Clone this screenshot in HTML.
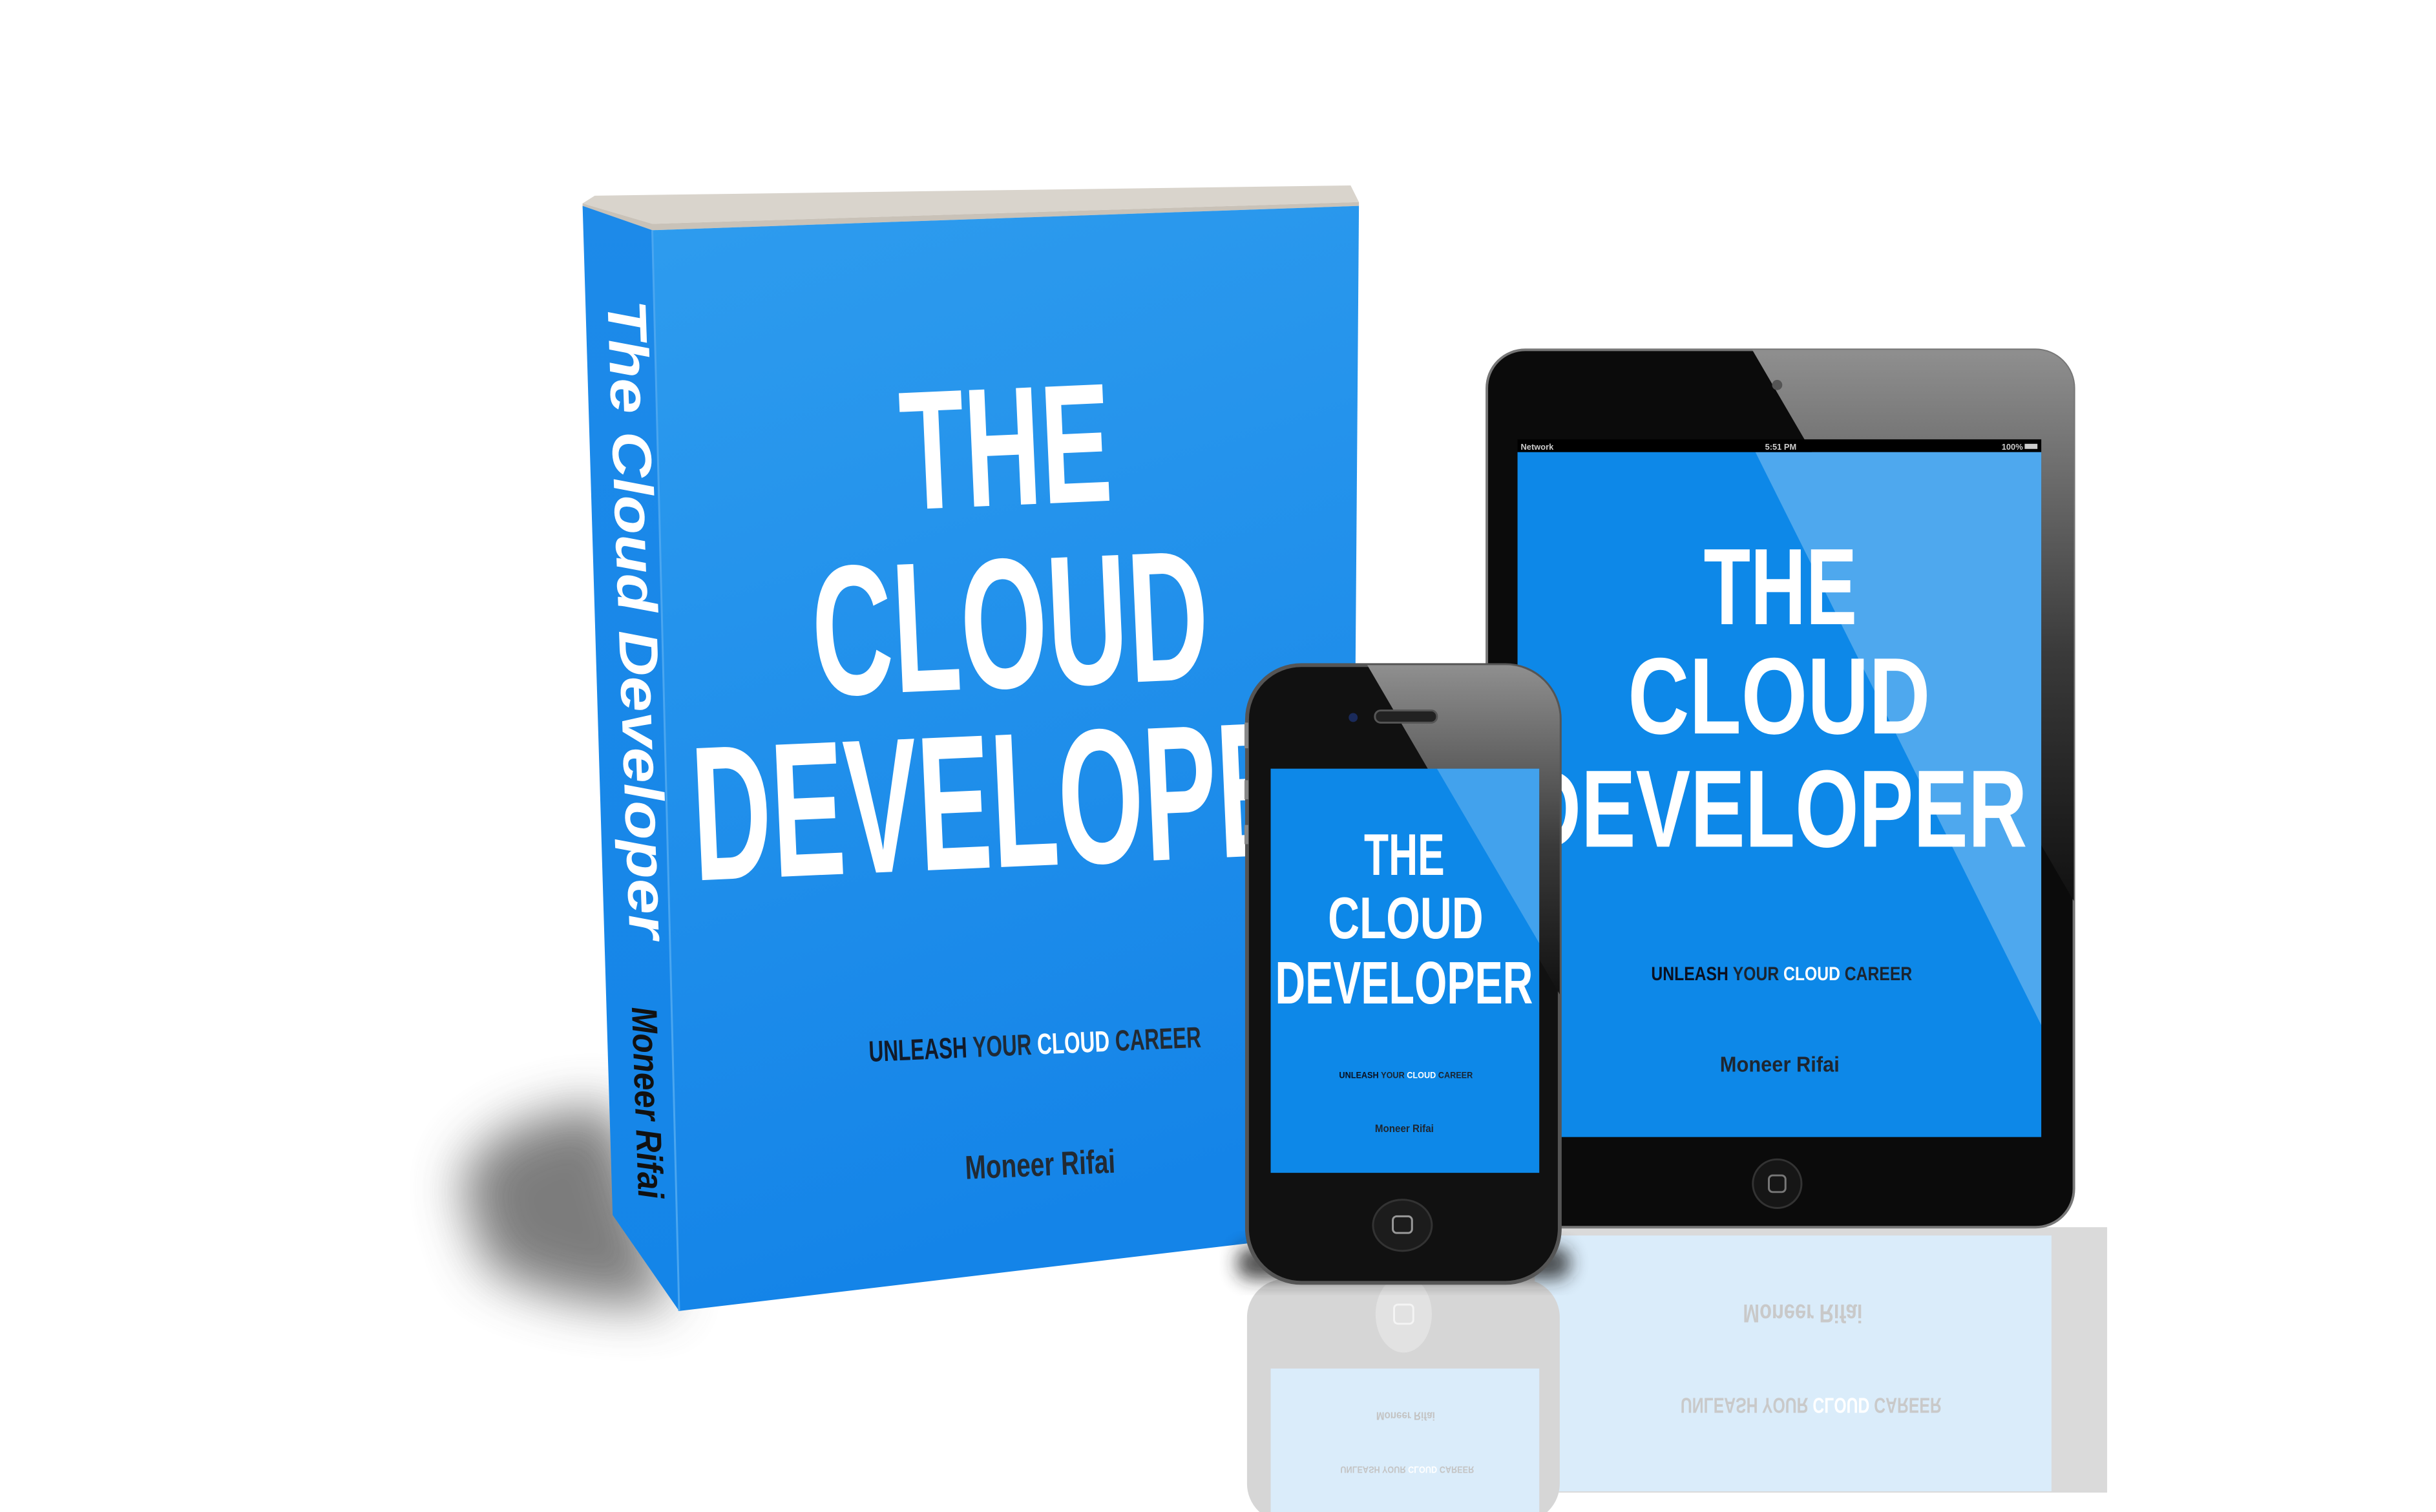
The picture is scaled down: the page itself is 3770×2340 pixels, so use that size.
<!DOCTYPE html>
<html><head><meta charset="utf-8"><style>
html,body{margin:0;padding:0;background:#fff;}
svg{display:block;}
text{font-family:"Liberation Sans",sans-serif;font-weight:bold;}
</style></head><body>
<svg width="3770" height="2340" viewBox="0 0 3770 2340" xmlns="http://www.w3.org/2000/svg">
<defs>
<linearGradient id="front" x1="0" y1="0" x2="0.2" y2="1">
<stop offset="0" stop-color="#2e9cee"/><stop offset="1" stop-color="#1484e8"/></linearGradient>
<linearGradient id="spine" x1="0" y1="0" x2="0" y2="1">
<stop offset="0" stop-color="#1d8ae9"/><stop offset="1" stop-color="#1485e8"/></linearGradient>
<linearGradient id="bez" x1="0" y1="0" x2="0" y2="1">
<stop offset="0" stop-color="#8f8f8f"/><stop offset="0.55" stop-color="#3a3a3a"/><stop offset="1" stop-color="#111"/></linearGradient>
<filter id="blur" x="-50%" y="-50%" width="200%" height="200%"><feGaussianBlur stdDeviation="40"/></filter>
<filter id="blur2" x="-50%" y="-50%" width="200%" height="200%"><feGaussianBlur stdDeviation="14"/></filter>
<clipPath id="ipadc"><rect x="2325" y="547" width="918" height="1372" rx="60"/></clipPath>
<clipPath id="ipads"><rect x="2373" y="707" width="819" height="1071"/></clipPath>
<clipPath id="phc"><rect x="1950" y="1040" width="489" height="966" rx="85"/></clipPath>
<clipPath id="phs"><rect x="1987" y="1202" width="420" height="632"/></clipPath>
</defs>
<g transform="scale(0.9897)">
<!-- book shadow -->
<path d="M720 1850 Q760 1740 960 1730 L1050 2040 Q880 2050 760 1980 Z" fill="#666" filter="url(#blur)" opacity="0.85"/>

<!-- book -->
<polygon points="911,318 1020,350 2125,316 2112,290 930,306" fill="#d9d4cc"/>
<polygon points="911,318 1020,350 2125,316 2125,322 1020,360 911,326" fill="#c9c2b8"/>
<polygon points="911,322 1020,360 1062,2050 958,1900" fill="url(#spine)"/>
<polygon points="1020,360 2125,322 2113,1925 1062,2050" fill="url(#front)"/>
<line x1="1020" y1="360" x2="1062" y2="2050" stroke="#4aa6f0" stroke-width="3"/>

<g transform="translate(950,470) rotate(88)">
<text x="0" y="0" font-size="86" font-style="italic" fill="#fff" textLength="1000" lengthAdjust="spacingAndGlyphs">The Cloud Developer</text>
</g>
<g transform="translate(988,1575) rotate(88)">
<text x="0" y="0" font-size="56" font-style="italic" fill="#111" textLength="300" lengthAdjust="spacingAndGlyphs">Moneer Rifai</text>
</g>

<g transform="rotate(-2.5 1580 1100)">
<text x="1590" y="790" font-size="265" fill="#fff" text-anchor="middle" textLength="330" lengthAdjust="spacingAndGlyphs">THE</text>
<text x="1585" y="1075" font-size="290" fill="#fff" text-anchor="middle" textLength="620" lengthAdjust="spacingAndGlyphs">CLOUD</text>
<text x="1075" y="1355" font-size="300" fill="#fff" textLength="1060" lengthAdjust="spacingAndGlyphs">DEVELOPER</text>
<text x="1335" y="1650" font-size="46" textLength="520" lengthAdjust="spacingAndGlyphs"><tspan fill="#111a2a">UNLEASH </tspan><tspan fill="#1f2a36">YOUR </tspan><tspan fill="#fff">CLOUD </tspan><tspan fill="#222a33">CAREER</tspan></text>
<text x="1595" y="1840" font-size="52" fill="#222a33" text-anchor="middle" textLength="235" lengthAdjust="spacingAndGlyphs">Moneer Rifai</text>
</g>

<!-- iPad reflection -->
<rect x="2370" y="1919" width="925" height="415" fill="#dadada"/>
<rect x="2400" y="1932" width="808" height="400" fill="#daecfa"/>
<g transform="translate(0,4080) scale(1,-1)">
<text x="2819" y="2040" font-size="40" fill="#c9c9c9" text-anchor="middle" textLength="187" lengthAdjust="spacingAndGlyphs">Moneer Rifai</text>
</g>
<g transform="translate(0,4372) scale(1,-1)">
<text x="2628" y="2186" font-size="34" textLength="408" lengthAdjust="spacingAndGlyphs"><tspan fill="#c9c9c9">UNLEASH YOUR </tspan><tspan fill="#fff">CLOUD </tspan><tspan fill="#c9c9c9">CAREER</tspan></text>
</g>

<!-- iPad -->
<rect x="2325" y="547" width="918" height="1372" rx="60" fill="#0b0b0b" stroke="#777" stroke-width="4"/>
<g clip-path="url(#ipadc)">
<polygon points="2740,547 3243,547 3243,1409" fill="url(#bez)"/>
</g>
<rect x="2373" y="687" width="819" height="20" fill="#000"/>
<text x="2378" y="703" font-size="13" fill="#ccc" font-weight="normal">Network</text>
<text x="2760" y="703" font-size="13" fill="#ccc" font-weight="normal">5:51 PM</text>
<text x="3130" y="703" font-size="13" fill="#ccc" font-weight="normal">100%</text>
<rect x="3166" y="694" width="20" height="8" fill="#ccc"/>
<circle cx="2779" cy="602" r="8" fill="#555"/>
<rect x="2373" y="707" width="819" height="1071" fill="#0d88e8"/>
<g clip-path="url(#ipads)">
<polygon points="2745,707 3192,707 3192,1603" fill="#fff" opacity="0.27"/>
</g>
<text x="2784" y="976" font-size="170" fill="#fff" text-anchor="middle" textLength="240" lengthAdjust="spacingAndGlyphs">THE</text>
<text x="2782" y="1147" font-size="170" fill="#fff" text-anchor="middle" textLength="473" lengthAdjust="spacingAndGlyphs">CLOUD</text>
<text x="2380" y="1324" font-size="172" fill="#fff" textLength="790" lengthAdjust="spacingAndGlyphs">DEVELOPER</text>
<text x="2582" y="1533" font-size="30" textLength="408" lengthAdjust="spacingAndGlyphs"><tspan fill="#0a1020">UNLEASH </tspan><tspan fill="#1a2430">YOUR </tspan><tspan fill="#fff">CLOUD </tspan><tspan fill="#1a2430">CAREER</tspan></text>
<text x="2783" y="1676" font-size="34" fill="#1e2630" text-anchor="middle" textLength="187" lengthAdjust="spacingAndGlyphs">Moneer Rifai</text>
<circle cx="2779" cy="1851" r="38" fill="#161616" stroke="#333" stroke-width="3"/>
<rect x="2766" y="1838" width="26" height="26" rx="6" fill="none" stroke="#777" stroke-width="3"/>

<!-- phone reflection -->
<rect x="1950" y="2000" width="489" height="380" rx="60" fill="#d6d6d6"/>
<rect x="1987" y="2140" width="420" height="240" fill="#daecfa"/>
<ellipse cx="2195" cy="2055" rx="44" ry="60" fill="#e2e2e2"/>
<rect x="2180" y="2040" width="30" height="30" rx="6" fill="none" stroke="#f4f4f4" stroke-width="3"/>
<g transform="translate(0,4416) scale(1,-1)">
<text x="2198" y="2208" font-size="18" fill="#c4c4c4" text-anchor="middle" textLength="92" lengthAdjust="spacingAndGlyphs">Moneer Rifai</text>
</g>
<g transform="translate(0,4586) scale(1,-1)">
<text x="2096" y="2293" font-size="15" textLength="209" lengthAdjust="spacingAndGlyphs"><tspan fill="#c4c4c4">UNLEASH YOUR </tspan><tspan fill="#fff">CLOUD </tspan><tspan fill="#c4c4c4">CAREER</tspan></text>
</g>
<rect x="1935" y="1950" width="520" height="50" rx="20" fill="#222" filter="url(#blur2)" opacity="0.8"/>

<!-- phone -->
<rect x="1950" y="1040" width="489" height="966" rx="85" fill="#111" stroke="#555" stroke-width="6"/>
<g clip-path="url(#phc)">
<polygon points="2138,1040 2439,1040 2439,1555" fill="url(#bez)"/>
</g>
<rect x="1946" y="1130" width="6" height="40" fill="#888"/>
<rect x="1946" y="1220" width="6" height="30" fill="#888"/>
<rect x="1946" y="1290" width="6" height="30" fill="#888"/>
<rect x="2150" y="1111" width="97" height="19" rx="9" fill="#222" stroke="#555" stroke-width="3"/>
<circle cx="2116" cy="1122" r="7" fill="#1a2a5a"/>
<rect x="1987" y="1202" width="420" height="632" fill="#0d88e8"/>
<g clip-path="url(#phs)">
<polygon points="2247,1202 2407,1202 2407,1475" fill="#fff" opacity="0.22"/>
</g>
<text x="2196" y="1368" font-size="92" fill="#fff" text-anchor="middle" textLength="126" lengthAdjust="spacingAndGlyphs">THE</text>
<text x="2198" y="1467" font-size="92" fill="#fff" text-anchor="middle" textLength="243" lengthAdjust="spacingAndGlyphs">CLOUD</text>
<text x="1994" y="1569" font-size="94" fill="#fff" textLength="403" lengthAdjust="spacingAndGlyphs">DEVELOPER</text>
<text x="2094" y="1686" font-size="14" textLength="209" lengthAdjust="spacingAndGlyphs"><tspan fill="#0a1020">UNLEASH </tspan><tspan fill="#1a2430">YOUR </tspan><tspan fill="#fff">CLOUD </tspan><tspan fill="#1a2430">CAREER</tspan></text>
<text x="2196" y="1770" font-size="17" fill="#1e2630" text-anchor="middle" textLength="92" lengthAdjust="spacingAndGlyphs">Moneer Rifai</text>
<ellipse cx="2193" cy="1916" rx="46" ry="40" fill="#1c1c1c" stroke="#333" stroke-width="3"/>
<rect x="2178" y="1902" width="30" height="26" rx="6" fill="none" stroke="#999" stroke-width="3"/>
</g>
</svg>
</body></html>
